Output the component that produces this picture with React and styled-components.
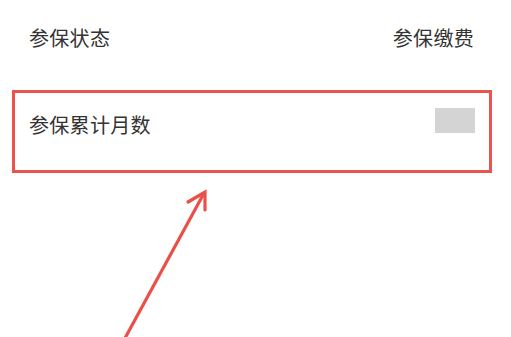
import React from "react";
import styled, { createGlobalStyle } from "styled-components";

const GlobalStyle = createGlobalStyle`
  html, body {
    margin: 0;
    padding: 0;
    background: #ffffff;
  }
  body {
    font-family: "Noto Sans CJK SC", "Noto Sans", sans-serif;
    color: #333333;
  }
`;

function App() {
  return (
    <S.Page>
      <GlobalStyle />
      <div className="header">
        <span className="label">参保状态</span>
        <span className="label">参保缴费</span>
      </div>

      <div className="highlight">
        <span className="label">参保累计月数</span>
        <span className="placeholder" />
      </div>

      <svg className="arrow" width="511" height="337" viewBox="0 0 511 337">
        <line
          x1="124"
          y1="340"
          x2="203"
          y2="195"
          stroke="#ea5048"
          strokeWidth="3.2"
          strokeLinecap="round"
        />
        <polyline
          points="188,202 205,192 205,210"
          fill="none"
          stroke="#ea5048"
          strokeWidth="3.2"
          strokeLinecap="round"
          strokeLinejoin="miter"
        />
      </svg>
    </S.Page>
  );
}

export default App;

const S = {
  Page: styled.div`
    position: relative;
    width: 511px;
    height: 337px;
    overflow: hidden;
    background: #ffffff;

    .header {
      display: flex;
      justify-content: space-between;
      align-items: center;
      padding: 21px 37px 0 29px;
      height: 33px;
    }

    .label {
      font-size: 20px;
      line-height: 33px;
      color: #333333;
      letter-spacing: 0.3px;
    }

    .highlight {
      display: flex;
      justify-content: space-between;
      align-items: flex-start;
      box-sizing: border-box;
      margin: 36px 19px 0 12px;
      height: 83px;
      border: 3px solid #e9544e;
      padding: 15px 14px 0 14px;

      .label {
        line-height: 33px;
      }
    }

    .placeholder {
      display: block;
      width: 40px;
      height: 25px;
      margin-top: 0;
      background: #d4d4d4;
    }

    .arrow {
      position: absolute;
      left: 0;
      top: 0;
      pointer-events: none;
    }
  `,
};
